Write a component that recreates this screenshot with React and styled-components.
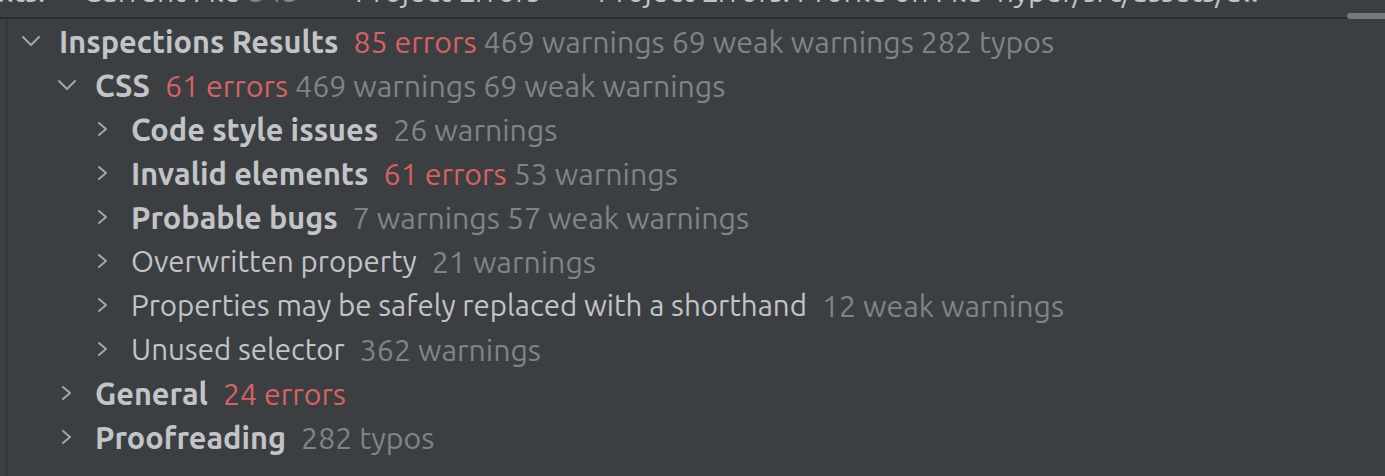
import React from "react";
import styled, { createGlobalStyle } from "styled-components";

const GlobalStyle = createGlobalStyle`
  html, body { margin: 0; padding: 0; background: #3c3f42; }
  body {
    font-family: "Ubuntu", "Liberation Sans", "Noto Sans", sans-serif;
    font-size: 30px;
    color: #c2c4c7;
  }
`;

const Panel = styled.div`
  width: 1385px;
  height: 476px;
  background: #3c3f42;
  display: flex;
  flex-direction: column;
  overflow: hidden;
  position: relative;
`;

const TabBar = styled.div`
  height: 17px;
  flex: none;
  border-bottom: 2px solid #2c2e31;
  display: flex;
  align-items: flex-start;
  overflow: hidden;
  white-space: nowrap;
`;

const Tab = styled.span`
  font-size: 30px;
  line-height: 30px;
  margin-top: -24px;
  margin-left: ${(p) => p.$ml}px;
  color: #c2c4c7;
`;

const TabCount = styled.span`
  color: #808387;
  margin-left: 8px;
`;

const TabMark = styled.span`
  font-size: 30px;
  line-height: 30px;
  margin-top: -24px;
  margin-left: ${(p) => p.$ml}px;
  color: #6f7276;
`;

const ScrollThumb = styled.div`
  position: absolute;
  right: -6px;
  top: 13px;
  width: 44px;
  height: 6px;
  border-radius: 3px;
  background: #75787c;
`;

const Body = styled.div`
  flex: 1;
  display: flex;
`;

const Gutter = styled.div`
  width: 6px;
  flex: none;
`;

const Tree = styled.div`
  flex: 1;
  border-left: 2px solid #35383b;
  padding-top: 3px;
  display: flex;
  flex-direction: column;
`;

const Row = styled.div`
  height: 44px;
  display: flex;
  align-items: center;
  padding-left: ${(p) => 9 + p.$level * 36}px;
  white-space: nowrap;
`;

const Toggle = styled.span`
  width: 28px;
  height: 44px;
  margin-right: 14px;
  flex: none;
  display: flex;
  align-items: center;
  justify-content: center;
  padding-bottom: 6px;
  box-sizing: border-box;
`;

const Name = styled.span`
  font-weight: ${(p) => (p.$bold ? 700 : 400)};
  font-size: ${(p) => (p.$bold ? "30.7px" : "29.5px")};
  color: #c2c4c7;
  line-height: 44px;
  margin-top: -4px;
`;

const Counts = styled.span`
  margin-left: 15px;
  font-size: 30.3px;
  line-height: 44px;
  margin-top: -4px;
`;

const Count = styled.span`
  color: ${(p) => (p.$error ? "#d9615f" : "#808387")};
`;

const ChevronDown = () => (
  <svg width="20" height="12" viewBox="0 0 20 12" fill="none">
    <path d="M2 2 L10 10 L18 2" stroke="#a3a6a9" strokeWidth="2" strokeLinecap="round" strokeLinejoin="round" />
  </svg>
);

const ChevronRight = () => (
  <svg width="12" height="16" viewBox="0 0 12 16" fill="none">
    <path d="M2 2 L9 8 L2 14" stroke="#a3a6a9" strokeWidth="2" strokeLinecap="round" strokeLinejoin="round" />
  </svg>
);

const rows = [
  { level: 0, open: true, name: "Inspections Results", bold: true, counts: [["85 errors", true], ["469 warnings 69 weak warnings 282 typos"]] },
  { level: 1, open: true, name: "CSS", bold: true, counts: [["61 errors", true], ["469 warnings 69 weak warnings"]] },
  { level: 2, name: "Code style issues", bold: true, counts: [["26 warnings"]] },
  { level: 2, name: "Invalid elements", bold: true, counts: [["61 errors", true], ["53 warnings"]] },
  { level: 2, name: "Probable bugs", bold: true, counts: [["7 warnings 57 weak warnings"]] },
  { level: 2, name: "Overwritten property", counts: [["21 warnings"]] },
  { level: 2, name: "Properties may be safely replaced with a shorthand", counts: [["12 weak warnings"]] },
  { level: 2, name: "Unused selector", counts: [["362 warnings"]] },
  { level: 1, name: "General", bold: true, counts: [["24 errors", true]] },
  { level: 1, name: "Proofreading", bold: true, counts: [["282 typos"]] },
];

export default function App() {
  return (
    <>
      <GlobalStyle />
      <Panel>
        <TabBar>
          <Tab $ml={-60}>Results:</Tab>
          <Tab $ml={37}>
            Current File<TabCount>343</TabCount>
          </Tab>
          <Tab $ml={56}>Project Errors</Tab>
          <Tab $ml={58}>Project Errors: Profile on File 'hyper/src/assets/all</Tab>
          <TabMark $ml={30}>·</TabMark>
          <TabMark $ml={60}>·</TabMark>
        </TabBar>
        <ScrollThumb />
        <Body>
          <Gutter />
          <Tree>
            {rows.map((r, i) => (
              <Row key={i} $level={r.level}>
                <Toggle>{r.open ? <ChevronDown /> : <ChevronRight />}</Toggle>
                <Name $bold={r.bold}>{r.name}</Name>
                <Counts>
                  {r.counts.map(([t, err], j) => (
                    <React.Fragment key={j}>
                      {j > 0 ? " " : null}
                      <Count $error={err}>{t}</Count>
                    </React.Fragment>
                  ))}
                </Counts>
              </Row>
            ))}
          </Tree>
        </Body>
      </Panel>
    </>
  );
}
